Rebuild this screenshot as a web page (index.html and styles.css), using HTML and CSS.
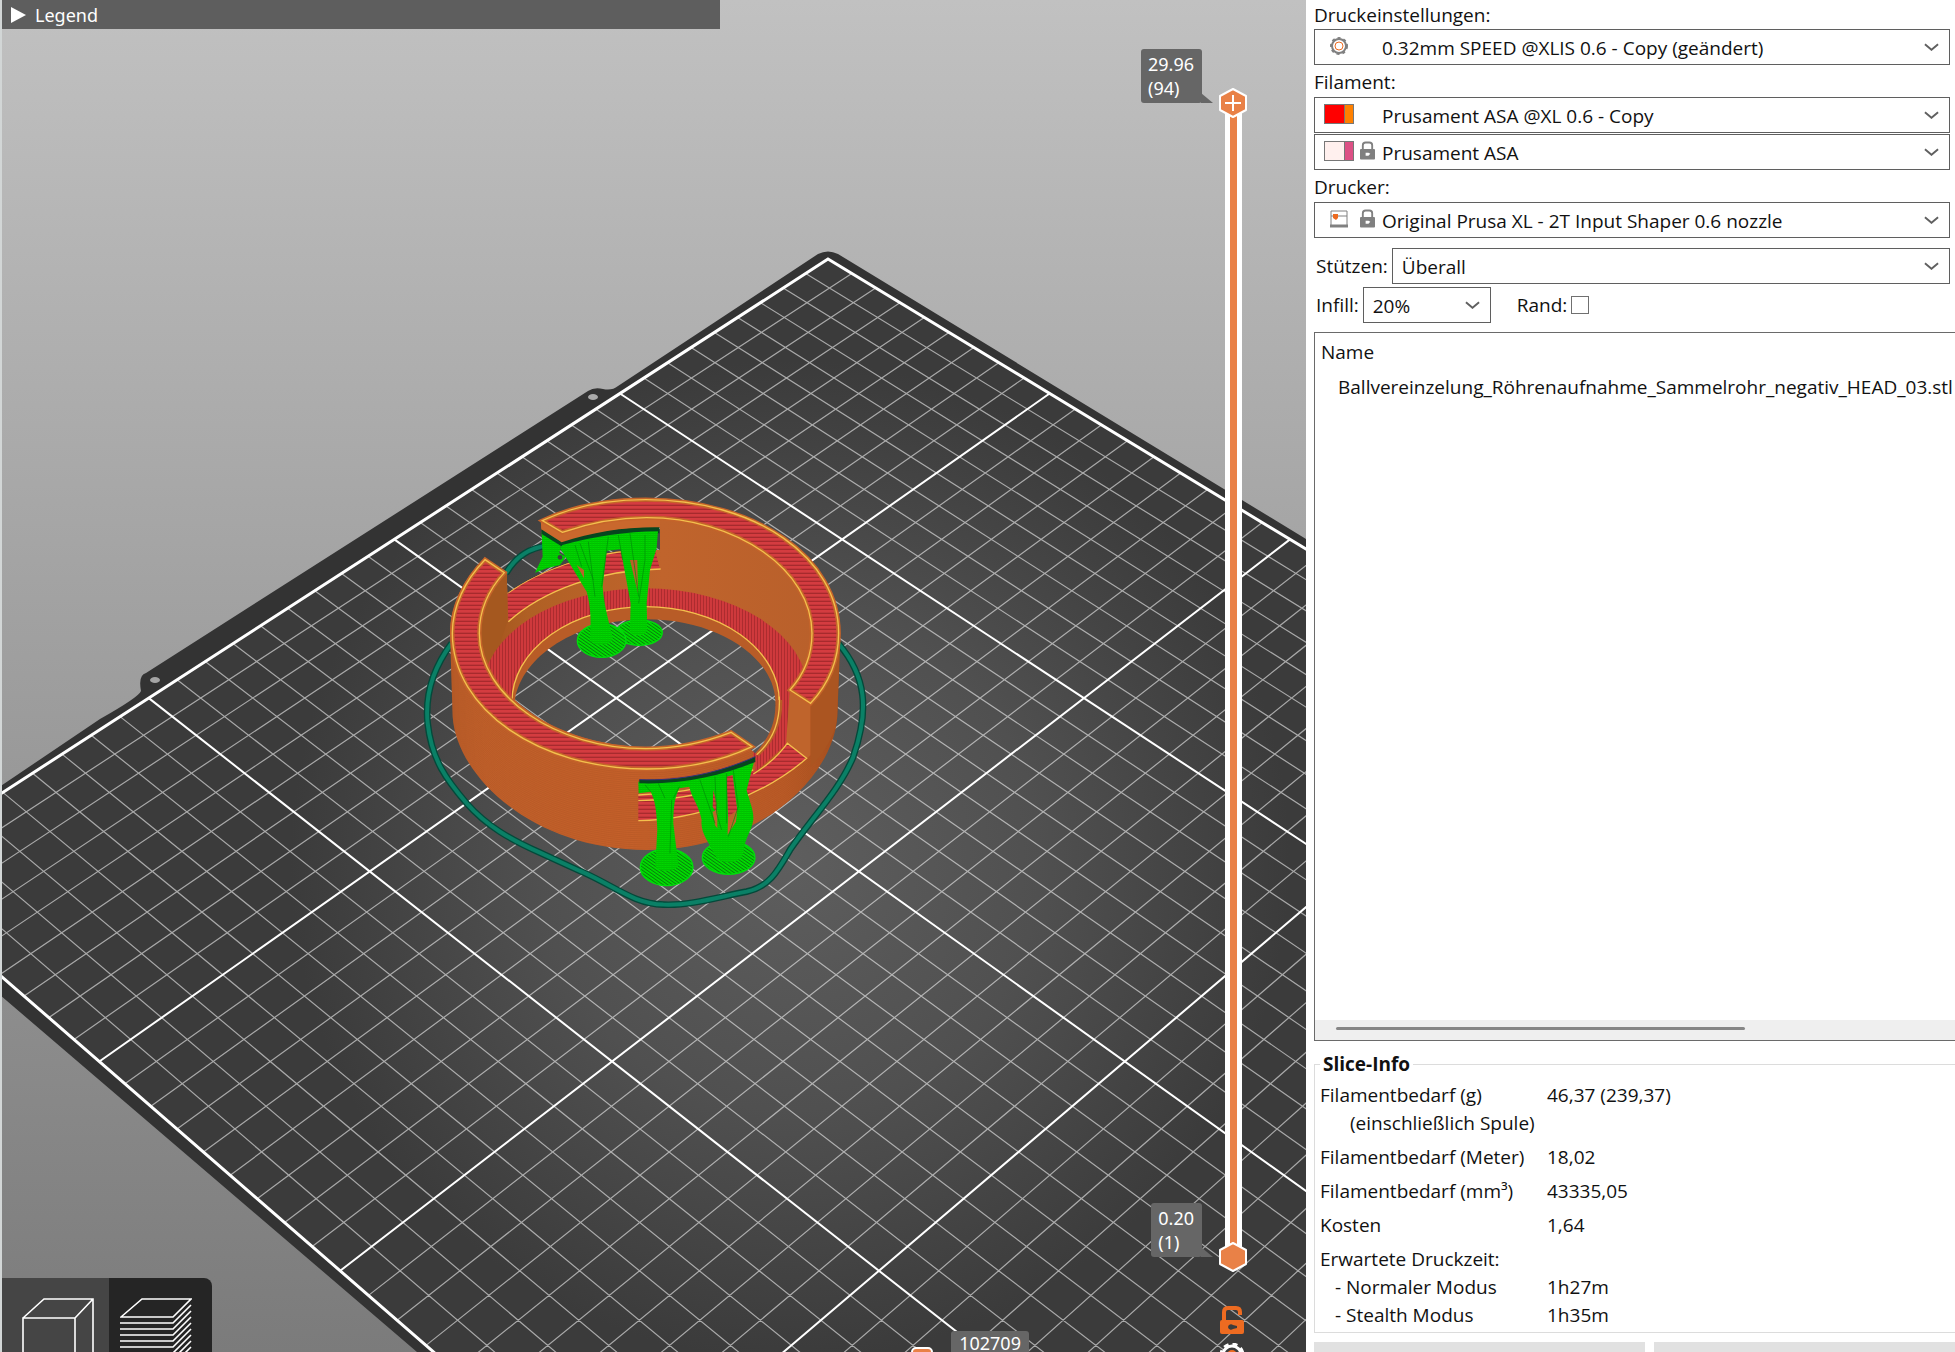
FILE: index.html
```html
<!DOCTYPE html>
<html lang="de">

<head>
    <meta charset="UTF-8">
    <meta name="viewport" content="width=device-width, initial-scale=1.0">
    <title>Slicer</title>
    <link rel="stylesheet" href="styles.css">
</head>

<body>
    <main class="viewport">
        <svg class="scene" viewBox="0 0 1306 1352" preserveAspectRatio="xMidYMid slice" aria-hidden="true">
            <defs>
                <radialGradient id="bedLight" gradientUnits="userSpaceOnUse" cx="790" cy="860" r="500">
                    <stop offset="0" stop-color="#5e5e5e" />
                    <stop offset="0.5" stop-color="#505050" />
                    <stop offset="1" stop-color="#3b3b3b" />
                </radialGradient>
                <linearGradient id="wall" x1="0" x2="1" y1="0" y2="0">
                    <stop offset="0" stop-color="#bf602b" />
                    <stop offset="0.5" stop-color="#c4602a" />
                    <stop offset="0.85" stop-color="#bb5b27" />
                    <stop offset="1" stop-color="#a9521f" />
                </linearGradient>
                <linearGradient id="innerWall" x1="0" x2="1" y1="0" y2="0">
                    <stop offset="0" stop-color="#a2531d" />
                    <stop offset="0.15" stop-color="#b06024" />
                    <stop offset="0.55" stop-color="#c0642c" />
                    <stop offset="1" stop-color="#b9602b" />
                </linearGradient>
                <pattern id="infillH" width="12" height="12" patternUnits="userSpaceOnUse">
                    <rect width="12" height="12" fill="#d43c40" />
                    <rect width="12" height="4" y="8" fill="#a62a2d" />
                </pattern>
                <pattern id="infillV" width="9" height="9" patternUnits="userSpaceOnUse">
                    <rect width="9" height="9" fill="#cf393c" />
                    <rect width="3" height="9" fill="#ab2c2f" />
                </pattern>
                <pattern id="support" width="8" height="6" patternUnits="userSpaceOnUse">
                    <rect width="8" height="6" fill="#00da00" />
                    <path d="M0 3 Q4 6 8 3" fill="none" stroke="#00a800" stroke-width="2" />
                </pattern>
                <pattern id="supportBase" width="8" height="8" patternUnits="userSpaceOnUse" patternTransform="rotate(-55)">
                    <rect width="8" height="8" fill="#00e000" />
                    <rect width="3" height="8" fill="#08800c" />
                </pattern>
                <path id="ringBack" d="M427 152C520 108 630 89 737 89C1070 89 1316 265 1316 490C1316 570 1288 640 1232 700L1170 660C1215 610 1236 550 1236 490C1236 300 1010 143 740 143C650 143 565 160 487 187Z" />
                <path id="ringFront" d="M255 269L313 308C265 360 238 420 238 490C238 680 470 836 737 836C830 836 920 815 993 787L1056 830C960 876 860 897 740 897C420 897 157 720 157 490C157 410 195 330 255 269Z" />
                <clipPath id="bodyClip">
                    <path d="M150 490C150 400 195 320 255 264L320 305L322 370C420 300 560 250 700 240L780 240V172C640 170 560 190 485 215L425 180L422 150C500 110 620 86 737 86C1080 86 1322 270 1322 490L1312 740C1300 920 1080 1140 740 1140C400 1140 170 920 158 740Z" />
                </clipPath>
                <clipPath id="innerClip">
                    <ellipse cx="737" cy="490" rx="500" ry="347" />
                </clipPath>
                <mask id="hole" maskUnits="userSpaceOnUse" x="0" y="0" width="1500" height="1380">
                    <rect width="1500" height="1380" fill="#fff" />
                    <path d="M345 690C365 560 530 448 740 448C950 448 1120 560 1126 690C1130 760 1105 805 1066 850L990 785C900 820 820 834 737 832C600 830 440 780 345 690Z" fill="#000" />
                </mask>
            </defs>

            <!-- build plate -->
            <path fill="#333" d="M-20 800L100 719Q139 697 141 691Q138 675 146 673L588 391Q594 387 603 389Q612 391 618 386L818 254Q828 249 838 254L1306 539V1352H417L0 995L-20 990Z" />
            <path id="plate" fill="url(#bedLight)" />
            <path id="minorLines" class="grid-minor" />
            <path id="majorLines" class="grid-major" />
            <path id="border" class="grid-border" />
            <ellipse cx="593" cy="397" rx="5" ry="3" fill="#aaa" />
            <ellipse cx="155" cy="680" rx="5" ry="3" fill="#a5a5a5" />

            <!-- sliced part -->
            <g transform="translate(400 470) scale(0.3333)">
                <path class="skirt" d="M155 520C95 600 75 680 83 760C95 870 140 930 200 1000C260 1068 330 1108 420 1148L540 1203C640 1245 700 1302 790 1304C870 1308 960 1280 1040 1265C1110 1250 1135 1200 1170 1140C1230 1050 1320 960 1360 860C1408 720 1400 620 1315 520M318 310C350 255 390 235 445 226" />
                <path class="skirt-line" d="M155 520C95 600 75 680 83 760C95 870 140 930 200 1000C260 1068 330 1108 420 1148L540 1203C640 1245 700 1302 790 1304C870 1308 960 1280 1040 1265C1110 1250 1135 1200 1170 1140C1230 1050 1320 960 1360 860C1408 720 1400 620 1315 520M318 310C350 255 390 235 445 226" />

                <path d="M425 185L485 215L478 250L498 260L480 285L440 295L405 308L428 260Z" fill="url(#support)" />
                <circle cx="480" cy="262" r="7" fill="#3d3d3d" />

                <g mask="url(#hole)">
                    <g clip-path="url(#bodyClip)">
                        <rect x="140" y="80" width="1190" height="1070" fill="url(#wall)" />
                        <g id="layers" class="layers"></g>
                        <g clip-path="url(#innerClip)">
                            <rect x="236" y="140" width="1002" height="700" fill="url(#innerWall)" />
                            <path d="M322 370C420 300 560 250 700 243L765 240L780 297C600 300 430 360 325 455Z" fill="url(#infillH)" />
                            <path class="seam" d="M322 370C420 300 560 250 710 241M325 455C430 360 600 300 782 297" />
                            <path d="M322 305V455L300 520L262 612L236 600V400Z" fill="#a5581f" />
                            <ellipse cx="735" cy="665" rx="488" ry="310" fill="url(#infillV)" />
                        </g>
                        <path d="M1170 660L1160 822L1060 912V830L1120 780L1140 690Z" fill="url(#infillV)" />
                        <g clip-path="url(#innerClip)">
                            <ellipse cx="737" cy="695" rx="401" ry="285" fill="#b85c27" class="seam-ring" />
                        </g>
                        <path d="M1138 690C1140 760 1110 815 1070 852" fill="none" stroke="#b85c27" stroke-width="18" />
                        <path class="seam" d="M1138 680C1142 760 1115 815 1070 854" />
                        <path d="M1170 660L1232 700V855L1220 866L1158 822Z" fill="#bf642c" />
                        <path d="M1232 700C1285 650 1315 570 1320 500L1312 740C1305 800 1270 850 1232 890Z" fill="#ab5521" />
                        <path d="M1162 820L1220 865C1100 970 900 1050 715 1052V930C850 928 960 900 1066 860V912C1105 885 1140 850 1162 820Z" fill="url(#infillH)" />
                        <path d="M715 930C850 928 960 900 1066 860V900C980 945 860 970 715 975Z" fill="#b85c27" />
                        <path class="seam" d="M1060 912C1105 885 1140 850 1162 820L1220 865C1100 970 900 1050 715 1052M715 975C860 970 960 945 1060 900M715 992C850 990 960 960 1020 935" />
                    </g>
                </g>

                <!-- back supports -->
                <path d="M425 175L485 210C580 183 680 170 778 170V190C680 190 580 205 487 230L425 192Z" fill="#07461f" />
                <ellipse cx="718" cy="488" rx="69" ry="38" fill="url(#supportBase)" class="base" />
                <ellipse cx="605" cy="512" rx="73" ry="50" fill="url(#supportBase)" class="base" />
                <path fill="url(#support)" d="M487 225C580 200 680 184 774 184L770 235L750 300L740 400L742 480C735 500 700 500 690 485L692 400L668 270L662 238L620 242L608 350C612 400 622 440 638 500C640 530 575 530 570 510C575 440 570 400 560 365L515 290L480 235Z" />
                <path fill="#b96029" d="M530 285L552 300V325ZM690 270L712 270L714 370Z" />
                <path class="support-edge" d="M540 220L580 330M565 215L585 380M625 200L605 350M655 195L668 270M690 190L716 380M735 195V270L716 400M525 225L545 290" />

                <!-- upper rings -->
                <path d="M422 150L485 187C570 160 680 142 780 145V172C680 170 580 185 485 217L424 178Z" fill="#c9682d" />
                <use href="#ringBack" class="ring-rim" />
                <use href="#ringBack" class="ring-seam" />
                <use href="#ringFront" class="ring-rim" />
                <use href="#ringFront" class="ring-seam" />

                <!-- front supports -->
                <ellipse cx="800" cy="1192" rx="79" ry="55" fill="url(#supportBase)" class="base" />
                <ellipse cx="986" cy="1163" rx="79" ry="50" fill="url(#supportBase)" class="base" />
                <path fill="url(#support)" d="M715 935C840 938 960 912 1064 868L1040 960C1050 1000 1062 1020 1060 1050C1055 1085 1035 1100 1030 1150C1020 1185 960 1185 945 1155C930 1120 900 1090 905 1050C895 1000 875 985 868 950L838 955C825 980 820 1010 820 1060L835 1185C825 1208 775 1208 766 1188L772 1080C770 1020 765 990 752 965L716 970Z" />
                <path fill="url(#infillH)" d="M940 960L950 1000V1030L938 1010ZM980 920L998 915L1012 1020L985 1062Z" />
                <path fill="#bf612b" d="M938 1025L952 1020V1075L945 1065ZM984 1040L1012 1020L1008 1055L983 1095Z" />
                <path class="support-edge" d="M752 965L735 945M775 940L795 985M838 950L820 985M900 930L945 1060M945 920L950 1030L965 1080M980 910L980 1060M1000 900L1015 1010L985 1100M815 990L810 1150" />
                <path d="M718 929C840 934 960 908 1066 860V876C960 920 840 944 718 940Z" fill="#07461f" />
                <path d="M718 929C840 934 960 908 1066 860" fill="none" stroke="#30307a" stroke-width="3" />
            </g>
        </svg>

        <button class="legend-bar" type="button"><span class="triangle"></span>Legend</button>

        <div class="layer-slider">
            <input type="range" class="thumb-plus" min="1" max="94" value="94" aria-label="Obere Schicht">
            <input type="range" min="1" max="94" value="1" aria-label="Untere Schicht">
            <output class="tip tip-high">29.96<br>(94)</output>
            <output class="tip tip-low">0.20<br>(1)</output>
        </div>

        <div class="slider-tools">
            <button type="button" aria-label="Sperre">
                <svg width="24" height="28" viewBox="0 0 24 28">
                    <path d="M4 15V6Q4 2 8 2H16Q20 2 20 6V9" fill="none" stroke="#ed6b21" stroke-width="4" />
                    <rect y="14" width="24" height="14" rx="2" fill="#ed6b21" />
                    <path d="M8 21a3 3 0 0 1 5-2l4 1v2l-4 1a3 3 0 0 1-5-2z" fill="#3c3c3c" />
                </svg>
            </button>
            <button type="button" aria-label="Einstellungen">
                <svg width="24" height="24" viewBox="0 0 24 24">
                    <circle cx="12" cy="12" r="9" fill="#3c3c3c" stroke="#fff" stroke-width="3" />
                    <circle cx="12" cy="12" r="11" fill="none" stroke="#fff" stroke-width="3" stroke-dasharray="5 4" stroke-dashoffset="2" />
                    <circle cx="12" cy="12" r="5" fill="#ed6b21" />
                </svg>
            </button>
        </div>

        <div class="move-slider">
            <span class="move-thumb"></span>
            <output class="tip">102709</output>
        </div>

        <div class="view-switch">
            <button type="button" aria-label="3D-Ansicht">
                <svg width="72" height="54" viewBox="0 0 72 54">
                    <path d="M1 56V20H53V56M1 20L22 1H71V56M53 20L71 1" />
                </svg>
            </button>
            <button type="button" class="active" aria-label="Vorschau">
                <svg width="72" height="54" viewBox="0 0 72 54">
                    <path d="M1 19L22 1H71L53 19Z" />
                    <path id="sheets" />
                </svg>
            </button>
        </div>
    </main>

    <aside class="panel">
        <label class="caption first" for="print">Druckeinstellungen:</label>
        <div class="combo">
            <span class="combo-icons">
                <svg class="single" width="18" height="20" viewBox="0 0 18 20">
                    <circle cx="9" cy="10" r="7" fill="none" stroke="#808080" stroke-width="2" />
                    <circle cx="9" cy="10" r="8" fill="none" stroke="#808080" stroke-width="2" stroke-dasharray="3 3" />
                    <circle cx="9" cy="10" r="4" fill="none" stroke="#ed6b21" stroke-width="1" />
                </svg>
            </span>
            <select id="print"><option>0.32mm SPEED @XLIS 0.6 - Copy (geändert)</option></select>
        </div>

        <label class="caption" for="filament1">Filament:</label>
        <div class="combo">
            <span class="combo-icons"><span class="swatch red"></span></span>
            <select id="filament1"><option>Prusament ASA @XL 0.6 - Copy</option></select>
        </div>
        <div class="combo stacked">
            <span class="combo-icons">
                <span class="swatch pink"></span>
                <svg class="lock" width="15" height="19" viewBox="0 0 16 19">
                    <path d="M3 9V4Q3 1 6 1H10Q13 1 13 4V9" fill="none" stroke="#808080" stroke-width="2" />
                    <rect y="8" width="16" height="11" rx="1" fill="#808080" />
                    <path d="M6 12h3l2 1-2 2H6z" fill="#fff" />
                </svg>
            </span>
            <select id="filament2" aria-label="Filament 2"><option>Prusament ASA</option></select>
        </div>

        <label class="caption" for="printer">Drucker:</label>
        <div class="combo">
            <span class="combo-icons">
                <svg class="single" width="18" height="18" viewBox="0 0 18 18">
                    <path d="M1 17V1H17V17M1 6H17" fill="none" stroke="#808080" stroke-width="1" />
                    <path d="M0 16H18" stroke="#808080" stroke-width="3" />
                    <path d="M3 4H8V8L6 10L3 8Z" fill="#ed6b21" />
                </svg>
                <svg class="lock" width="15" height="19" viewBox="0 0 16 19">
                    <path d="M3 9V4Q3 1 6 1H10Q13 1 13 4V9" fill="none" stroke="#808080" stroke-width="2" />
                    <rect y="8" width="16" height="11" rx="1" fill="#808080" />
                    <path d="M6 12h3l2 1-2 2H6z" fill="#fff" />
                </svg>
            </span>
            <select id="printer"><option>Original Prusa XL - 2T Input Shaper 0.6 nozzle</option></select>
        </div>

        <div class="row supports">
            <label for="supports">Stützen:</label>
            <div class="combo plain"><select id="supports"><option>Überall</option></select></div>
        </div>
        <div class="row">
            <label for="infill">Infill:</label>
            <div class="combo plain small"><select id="infill"><option>20%</option></select></div>
            <label class="brim" for="brim">Rand:</label>
            <input type="checkbox" id="brim">
        </div>

        <div class="objects">
            <table>
                <thead><tr><th>Name</th></tr></thead>
                <tbody><tr><td>Ballvereinzelung_Röhrenaufnahme_Sammelrohr_negativ_HEAD_03.stl</td></tr></tbody>
            </table>
            <div class="scrollbar"><span></span></div>
        </div>

        <fieldset class="slice-info">
            <legend>Slice-Info</legend>
            <table>
                <tr><th>Filamentbedarf (g)</th><td>46,37 (239,37)</td></tr>
                <tr><th class="deep">(einschließlich Spule)</th><td></td></tr>
                <tr class="spaced"><th>Filamentbedarf (Meter)</th><td>18,02</td></tr>
                <tr class="spaced"><th>Filamentbedarf (mm³)</th><td>43335,05</td></tr>
                <tr class="spaced"><th>Kosten</th><td>1,64</td></tr>
                <tr class="spaced"><th>Erwartete Druckzeit:</th><td></td></tr>
                <tr><th class="indent">- Normaler Modus</th><td>1h27m</td></tr>
                <tr><th class="indent">- Stealth Modus</th><td>1h35m</td></tr>
            </table>
        </fieldset>

        <div class="actions">
            <button type="button" aria-label="Exportieren"></button>
            <button type="button" aria-label="Senden"></button>
        </div>
    </aside>

    <script src="script.js"></script>
</body>

</html>
```
FILE: styles.css
```css
* {
    padding: 0;
    margin: 0;
    box-sizing: border-box;
}

body {
    display: grid;
    grid-template-columns: minmax(0, 1306fr) minmax(0, 649fr);
    height: 100vh;
    overflow: hidden;
    background: #fff;
    color: #111;
    font-family: "Open Sans", "Noto Sans", sans-serif;
    font-size: 19px;
    line-height: 28px;
}

button,
select {
    font: inherit;
    color: inherit;
    border: 0;
    background: none;
}

/* 3D view */
.viewport {
    position: relative;
    overflow: hidden;
    height: 100vh;
    background: linear-gradient(#c1c1c1, #7b7b7b);
    font-family: "Noto Sans", sans-serif;
    font-size: 18px;
    line-height: 24px;
    color: #fff;
}

.viewport::after {
    content: "";
    position: absolute;
    inset: 0 auto 0 0;
    width: 2px;
    background: #d2d6d6;
}

.scene {
    display: block;
    width: 100%;
    height: 100%;
}

.grid-minor,
.grid-major,
.grid-border {
    fill: none;
    stroke: #fff;
}

.grid-minor {
    stroke-width: 1.2;
    opacity: 0.56;
}

.grid-major {
    stroke-width: 2;
}

.grid-border {
    stroke-width: 3;
}

.skirt,
.skirt-line {
    fill: none;
    stroke: #04493a;
    stroke-width: 20;
}

.skirt-line {
    stroke: #0a8066;
    stroke-width: 12;
}

.layers {
    fill: none;
    stroke: #8f431a;
    stroke-width: 2;
    opacity: 0.22;
}

.seam,
.ring-seam {
    fill: none;
    stroke: #f3c04d;
    stroke-width: 4;
}

.seam-ring {
    stroke: #f3c04d;
    stroke-width: 4;
}

.ring-rim {
    stroke: #c5642a;
    stroke-width: 13;
    fill: url(#infillH);
}

.base {
    stroke: #00dd0c;
    stroke-width: 4;
}

.support-edge {
    fill: none;
    stroke: #008f08;
    stroke-width: 3;
    opacity: 0.7;
}

.legend-bar {
    position: absolute;
    top: 0;
    left: 2px;
    width: 55%;
    height: 29px;
    padding-left: 9px;
    display: flex;
    align-items: center;
    gap: 9px;
    background: #5e5e5e;
}

.triangle {
    border-left: 15px solid #fff;
    border-top: 8px solid transparent;
    border-bottom: 8px solid transparent;
}

.layer-slider {
    position: absolute;
    top: 88px;
    bottom: 80px;
    right: 58px;
    width: 30px;
    background:
        linear-gradient(#e98147, #e98147) center / 7px calc(100% - 30px) no-repeat,
        linear-gradient(#fff, #fff) center / 17px calc(100% - 30px) no-repeat;
}

.layer-slider input {
    position: absolute;
    inset: 0;
    width: 30px;
    height: 100%;
    appearance: none;
    background: none;
    writing-mode: vertical-lr;
    direction: rtl;
    pointer-events: none;
}

.layer-slider input::-webkit-slider-thumb {
    appearance: none;
    pointer-events: auto;
    width: 30px;
    height: 30px;
    background: url("data:image/svg+xml,%3Csvg xmlns='http://www.w3.org/2000/svg' viewBox='0 0 30 30'%3E%3Cpath d='M15 1L28 8V22L15 29L2 22V8Z' fill='%23e98147' stroke='%23fff' stroke-width='2' stroke-linejoin='round'/%3E%3C/svg%3E") center / 30px 30px no-repeat;
}

.layer-slider .thumb-plus::-webkit-slider-thumb {
    background-image: url("data:image/svg+xml,%3Csvg xmlns='http://www.w3.org/2000/svg' viewBox='0 0 30 30'%3E%3Cpath d='M15 1L28 8V22L15 29L2 22V8Z' fill='%23e98147' stroke='%23fff' stroke-width='2' stroke-linejoin='round'/%3E%3Cpath d='M15 7V23M7 15H23' stroke='%23fff' stroke-width='2'/%3E%3C/svg%3E");
}

.tip {
    display: block;
    padding: 3px 8px;
    border-radius: 3px;
    background: #666;
}

.tip-high,
.tip-low {
    position: absolute;
    right: 46px;
    padding: 3px 8px 3px 7px;
}

.tip-high {
    bottom: calc(100% - 15px);
}

.tip-low {
    bottom: 15px;
}

.tip-high::after,
.tip-low::after {
    content: "";
    position: absolute;
    left: calc(100% - 1px);
    bottom: 0;
    border-left: 12px solid #666;
    border-top: 10px solid transparent;
}

.slider-tools {
    position: absolute;
    right: 62px;
    top: calc(100% - 46px);
    display: flex;
    flex-direction: column;
    gap: 9px;
}

.slider-tools svg {
    display: block;
}

.move-slider {
    position: absolute;
    left: 70%;
    top: calc(100% - 21px);
    display: flex;
    align-items: flex-start;
    gap: 18px;
    margin-left: -3px;
}

.move-slider .tip {
    padding-top: 0;
}

.move-thumb {
    width: 22px;
    height: 22px;
    margin-top: 16px;
    background: #e98147;
    border: 2px solid #fff;
    border-radius: 5px;
}

.view-switch {
    position: absolute;
    left: 2px;
    bottom: 0;
    display: flex;
    height: 74px;
    border-radius: 0 8px 0 0;
    overflow: hidden;
}

.view-switch button {
    width: 107px;
    padding: 20px 0 0 20px;
    background: #454545;
    text-align: left;
}

.view-switch .active {
    width: 103px;
    padding-left: 11px;
    background: #252525;
}

.view-switch svg {
    display: block;
}

.view-switch path {
    fill: none;
    stroke: #fff;
    stroke-width: 1.6;
}

/* settings panel */
.panel {
    display: flex;
    flex-direction: column;
    height: 100vh;
    padding-left: 8px;
}

.caption {
    height: 32px;
    line-height: 34px;
}

.caption.first {
    height: 29px;
    line-height: 30px;
}

.combo {
    display: flex;
    height: 36px;
    margin-right: 5px;
    border: 1px solid #5f5f5f;
}

.combo.stacked {
    margin-top: 1px;
}

.combo-icons {
    display: flex;
    align-items: center;
    gap: 6px;
    width: 67px;
    padding: 0 0 3px 9px;
}

.combo-icons .single {
    margin: 0 6px;
}

.swatch {
    width: 30px;
    height: 20px;
    border: 1px solid #777;
}

.swatch.red {
    background: linear-gradient(90deg, #f00 19px, #777 19px 20px, #ff8000 20px);
}

.swatch.pink {
    background: linear-gradient(90deg, #fff0ee 19px, #777 19px 20px, #dc5085 20px);
}

.combo select {
    flex: 1;
    min-width: 0;
    padding-top: 2px;
    appearance: none;
    outline: none;
    background: url("data:image/svg+xml,%3Csvg xmlns='http://www.w3.org/2000/svg' viewBox='0 0 16 8'%3E%3Cpath d='M1 1L8 7L15 1' fill='none' stroke='%23606060' stroke-width='2'/%3E%3C/svg%3E") right 10px top 13px / 15px 8px no-repeat;
}

.combo.plain {
    flex: 1;
}

.combo.plain select {
    padding-left: 9px;
}

.combo.small {
    flex: 0 0 128px;
    margin-right: 0;
}

.row {
    display: flex;
    align-items: center;
    gap: 4px;
    margin-top: 3px;
    padding-left: 2px;
}

.row.supports {
    margin-top: 10px;
}

.row .brim {
    margin-left: 22px;
}

.row input {
    appearance: none;
    width: 18px;
    height: 18px;
    border: 1px solid #707070;
}

.objects {
    flex: 1;
    min-height: 0;
    display: flex;
    flex-direction: column;
    justify-content: space-between;
    margin-top: 9px;
    border: 1px solid #6a6a6a;
    border-right: 0;
    overflow: hidden;
}

.objects th,
.objects td {
    text-align: left;
    font-weight: normal;
    white-space: nowrap;
    height: 35px;
}

.objects table {
    border-spacing: 0;
}

.objects th {
    padding: 3px 0 0 6px;
}

.objects td {
    padding: 3px 0 0 23px;
}

.scrollbar {
    height: 20px;
    padding: 7px 0 0 21px;
    background: #efefef;
}

.scrollbar span {
    display: block;
    width: 66%;
    height: 3px;
    border-radius: 2px;
    background: #868686;
}

.slice-info {
    margin-top: 9px;
    padding: 3px 0 3px 5px;
    border: 1px solid #dcdcdc;
    border-right: 0;
}

.slice-info legend {
    padding: 0 3px;
    font-weight: bold;
}

.slice-info table {
    border-spacing: 0;
}

.slice-info th {
    width: 227px;
    font-weight: normal;
    text-align: left;
    white-space: nowrap;
}

.slice-info .spaced th,
.slice-info .spaced td {
    padding-top: 6px;
}

.slice-info .indent {
    padding-left: 15px;
}

.slice-info .deep {
    padding-left: 30px;
}

.actions {
    display: grid;
    grid-template-columns: 331fr 301fr;
    gap: 9px;
    height: 10px;
    margin-top: 9px;
}

.actions button {
    background: #e1e1e1;
}
```
FILE: script.js
```js
// Build plate: 4 x 4 blocks of 9 cells, seen in perspective
const blocks = 4
const cells = 9

const project = (u, v) => {
    const w = 1 - 0.0389 * (u + v)
    const x = (828 - 232.2 * u + 180.8 * v) / w
    const y = (259 + 119.2 * (u + v)) / w
    return x.toFixed(1) + " " + y.toFixed(1)
}

let minor = ""
let major = ""
for (let i = 1; i < blocks * cells; i++) {
    const t = i / cells
    const lines = `M${project(t, 0)}L${project(t, blocks)}M${project(0, t)}L${project(blocks, t)}`
    if (i % cells === 0) {
        major += lines
    } else {
        minor += lines
    }
}

const outline = `M${project(0, 0)}L${project(blocks, 0)}L${project(blocks, blocks)}L${project(0, blocks)}Z`
document.getElementById("plate").setAttribute("d", outline)
document.getElementById("border").setAttribute("d", outline)
document.getElementById("minorLines").setAttribute("d", minor)
document.getElementById("majorLines").setAttribute("d", major)

// Layer lines on the outer wall
let layers = ""
for (let y = 500; y < 745; y += 6) {
    const inset = (y - 490) / 30
    layers += `<path d="M${150 + inset} ${y}A${586 - inset} 403 0 0 0 ${1322 - inset} ${y}"/>`
}
document.getElementById("layers").innerHTML = layers

// Stacked sheets of the preview icon
let sheets = ""
for (let y = 25; y < 80; y += 6) {
    sheets += `M0 ${y}H53L71 ${y - 18}`
}
document.getElementById("sheets").setAttribute("d", sheets)
```
